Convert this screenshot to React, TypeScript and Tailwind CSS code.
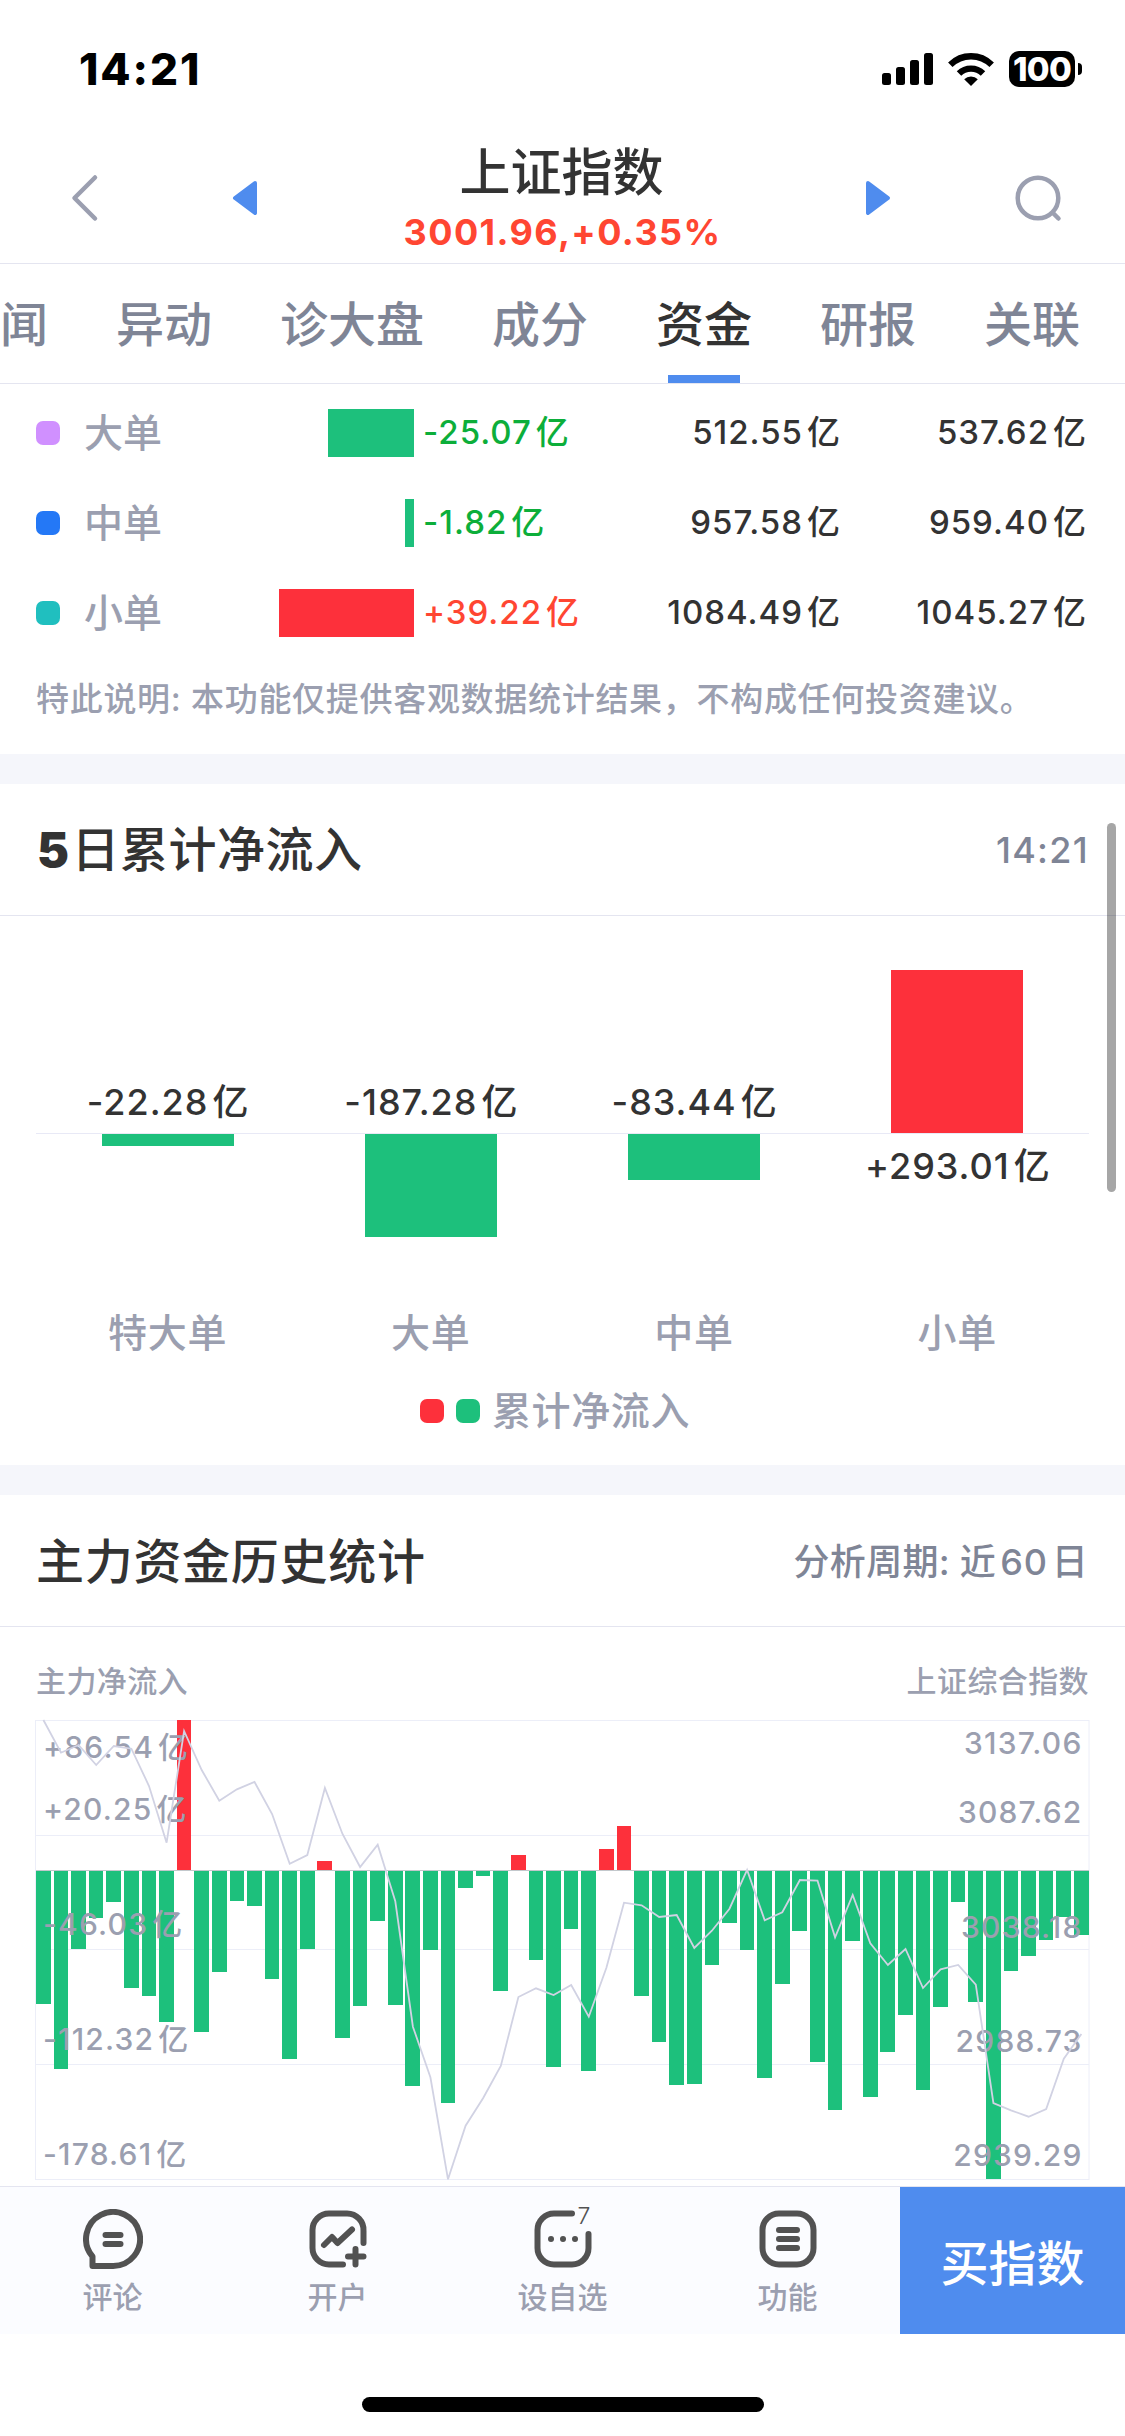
import React from 'react';
import clsx from 'clsx';

type Tab = { name: string; active?: boolean };

type OrderRow = {
  name: string;
  dot: string;
  value: string;
  up: boolean;
  barWidth: number;
  inflow: string;
  outflow: string;
};

type FiveDayItem = { name: string; value: string; height: number; up: boolean };

const tabs: Tab[] = [
  { name: '闻' },
  { name: '异动' },
  { name: '诊大盘' },
  { name: '成分' },
  { name: '资金', active: true },
  { name: '研报' },
  { name: '关联' },
];

const orderRows: OrderRow[] = [
  { name: '大单', dot: 'bg-[#d090ff]', value: '-25.07', up: false, barWidth: 86, inflow: '512.55', outflow: '537.62' },
  { name: '中单', dot: 'bg-[#2478f6]', value: '-1.82', up: false, barWidth: 9, inflow: '957.58', outflow: '959.40' },
  { name: '小单', dot: 'bg-[#20bfbf]', value: '+39.22', up: true, barWidth: 135, inflow: '1084.49', outflow: '1045.27' },
];

const fiveDays: FiveDayItem[] = [
  { name: '特大单', value: '-22.28', height: 12, up: false },
  { name: '大单', value: '-187.28', height: 103, up: false },
  { name: '中单', value: '-83.44', height: 46, up: false },
  { name: '小单', value: '+293.01', height: 163, up: true },
];

// 主力净流入：正数向上，负数向下
const flows = [
  -134, -199, -79, -48, -32, -118, -126, -152, 150, -162, -102, -31, -36, -109, -189,
  -79, 9, -168, -136, -51, -135, -216, -80, -233, -18, -6, -121, 15, -90, -197,
  -59, -201, 21, 44, -126, -172, -215, -214, -95, -53, -80, -208, -114, -61, -192,
  -240, -71, -227, -182, -145, -220, -137, -32, -132, -309, -101, -86, -70, -47, -65,
];

// 上证综合指数走势
const indexLine = [
  0, 32.7, 25, 45, 26, 28.7, 66, 122.7, 11, 50, 80.7, 69.3, 62, 94, 143.7,
  135, 68, 114, 147, 124.7, 181.3, 306.7, 357.3, 459.3, 405.7, 378, 346, 277, 268.3, 275,
  265, 296.7, 247.7, 182.7, 185.3, 197, 195, 228, 210.7, 188.7, 150, 200.3, 192.3, 160, 160.7,
  217.3, 175, 223.3, 245, 229, 268, 249.3, 245, 264.7, 383, 390.3, 396.7, 389, 338.7, 314,
];

const leftLabels: [string, number][] = [
  ['+86.54', 26.5],
  ['+20.25', 89],
  ['-46.03', 204],
  ['-112.32', 319],
  ['-178.61', 433.5],
];

const rightLabels: [string, number][] = [
  ['3137.06', 23.5],
  ['3087.62', 92],
  ['3038.18', 207],
  ['2988.73', 321.5],
  ['2939.29', 435.5],
];

function Amount({ value }: { value: string }) {
  return (
    <>
      {value}
      <span className="ml-[4px] tracking-normal">亿</span>
    </>
  );
}

function StatusBar() {
  return (
    <div className="flex h-[135px] items-start justify-between pt-[47px] pr-[43px] pl-[79px]">
      <div className="text-[44px] leading-[44px] font-extrabold tracking-[1.9px] text-black">14:21</div>
      <div className="flex h-[44px] items-center">
        <svg width="51" height="32" viewBox="0 0 51 32">
          <rect x="0" y="20" width="9" height="12" rx="2.5" />
          <rect x="14" y="14" width="9" height="18" rx="2.5" />
          <rect x="28" y="7" width="9" height="25" rx="2.5" />
          <rect x="42" y="0" width="9" height="32" rx="2.5" />
        </svg>
        <svg className="ml-[15px]" width="46" height="33" viewBox="0 0 46 33">
          <path d="M23 33 L16.2 26.3 A9.6 9.6 0 0 1 29.8 26.3 Z" />
          <path d="M11 20.5 A17 17 0 0 1 35 20.5" fill="none" stroke="#000" strokeWidth="6.3" />
          <path d="M2.3 11.8 A29.3 29.3 0 0 1 43.7 11.8" fill="none" stroke="#000" strokeWidth="6.3" />
        </svg>
        <div className="ml-[15px] flex h-9 w-[66px] items-center justify-center rounded-[10px] bg-black text-[33px] leading-none font-extrabold tracking-[-0.8px] text-white">
          100
        </div>
        <div className="ml-[3px] h-3 w-1 rounded-r-full bg-black" />
      </div>
    </div>
  );
}

function Header() {
  return (
    <header className="flex h-[129px] items-center border-b border-[#e4e5f0]">
      <svg className="mb-[2px] ml-[70px]" width="30" height="48" viewBox="0 0 30 48" fill="none" stroke="#9b9fb0" strokeWidth="4.5" strokeLinecap="round" strokeLinejoin="round">
        <path d="M25 3.5 L4.5 24 L25 44.5" />
      </svg>
      <svg className="mb-[2px] ml-[132px]" width="26" height="36" viewBox="0 0 26 36" fill="#4f8cee" stroke="#4f8cee" strokeWidth="4" strokeLinejoin="round">
        <path d="M23 3 L3 18 L23 33 Z" />
      </svg>
      <div className="flex flex-1 flex-col items-center">
        <h1 className="mt-[4px] text-[51px] leading-[56px] font-medium text-[#333]">上证指数</h1>
        <div className="mt-[5px] ml-[2px] text-[36px] leading-[52px] font-bold tracking-[1.4px] text-[#ff4632]">3001.96,+0.35%</div>
      </div>
      <svg className="mr-[122px] mb-[2px]" width="26" height="36" viewBox="0 0 26 36" fill="#4f8cee" stroke="#4f8cee" strokeWidth="4" strokeLinejoin="round">
        <path d="M3 3 L23 18 L3 33 Z" />
      </svg>
      <svg className="mr-[62px] mb-[2px]" width="50" height="50" viewBox="0 0 50 50" fill="none" stroke="#9b9fb0" strokeWidth="4.5" strokeLinecap="round">
        <circle cx="25" cy="25" r="20.3" />
        <path d="M40 40 L45.5 45.5" />
      </svg>
    </header>
  );
}

function TabBar() {
  return (
    <nav className="flex h-[120px] gap-[68px] border-b border-[#e4e5f0]">
      {tabs.map((t) => (
        <div
          key={t.name}
          className={clsx('flex shrink-0 flex-col items-center text-[48px] font-medium', t.active ? 'text-[#333]' : 'text-[#7f8596]')}
        >
          <span className="mt-[1px] h-[110px] leading-[120px]">{t.name}</span>
          {t.active && <span className="h-[9px] w-[72px] bg-[#4f8cee]" />}
        </div>
      ))}
    </nav>
  );
}

function OrderTable() {
  return (
    <section className="h-[370px] pt-1">
      {orderRows.map((r) => (
        <div key={r.name} className="flex h-[90px] items-center text-[33px] font-medium tracking-[1px]">
          <span className={clsx('ml-9 size-6 rounded-[7px]', r.dot)} />
          <span className="ml-6 text-[39px] tracking-normal text-[#9b9fb0]">{r.name}</span>
          <div className="flex flex-1 items-center">
            <div className="flex w-[252px] justify-end">
              <div className={clsx('h-12', r.up ? 'bg-[#fd303b]' : 'bg-[#1dc07c]')} style={{ width: r.barWidth }} />
            </div>
            <span className={clsx('ml-[9px]', r.up ? 'text-[#ff4632]' : 'text-[#0cae3a]')}>
              <Amount value={r.value} />
            </span>
          </div>
          <span className="w-[250px] text-right text-[#333]">
            <Amount value={r.inflow} />
          </span>
          <span className="mr-[39px] w-[246px] text-right text-[#333]">
            <Amount value={r.outflow} />
          </span>
        </div>
      ))}
      <p className="ml-9 pt-[17px] text-[33px] leading-[48px] font-medium tracking-[0.7px] whitespace-nowrap text-[#9b9fb0]">
        特此说明: 本功能仅提供客观数据统计结果，不构成任何投资建议。
      </p>
    </section>
  );
}

function FiveDayChart() {
  return (
    <section>
      <div className="flex h-[132px] items-center justify-between border-b border-[#e4e5f0] pr-9 pl-9">
        <h2 className="pt-[1px] text-[48px] leading-none font-medium tracking-[0.5px] text-[#333]">
          <span className="mr-[2px] ml-[1px] font-black">5</span>日累计净流入
        </h2>
        <span className="text-[36px] leading-none font-medium tracking-[1.3px] text-[#7f8596]">14:21</span>
      </div>
      <div className="mx-9 grid grid-cols-4 text-[36px] leading-[42px] font-medium tracking-[1px] text-[#333]">
        {fiveDays.map((d) => (
          <div key={d.name} className="flex flex-col items-center">
            <div className="flex h-[218px] w-full flex-col items-center justify-end border-b border-[#e8e9f6]">
              {d.up ? (
                <div className="w-[132px] bg-[#fd303b]" style={{ height: d.height }} />
              ) : (
                <span className="mb-[10px]">
                  <Amount value={d.value} />
                </span>
              )}
            </div>
            <div className="flex h-[168px] flex-col items-center">
              {d.up ? (
                <span className="mt-[11px]">
                  <Amount value={d.value} />
                </span>
              ) : (
                <div className="w-[132px] bg-[#1dc07c]" style={{ height: d.height }} />
              )}
            </div>
            <span className="h-[62px] text-[39px] leading-[62px] tracking-[0.8px] text-[#9b9fb0]">{d.name}</span>
          </div>
        ))}
      </div>
      <div className="flex h-[101px] items-center pl-[420px] text-[39px] font-medium tracking-[0.6px] text-[#9b9fb0]">
        <span className="mt-[-7px] size-6 rounded-[7px] bg-[#fd303b]" />
        <span className="mt-[-7px] ml-3 size-6 rounded-[7px] bg-[#1dc07c]" />
        <span className="mt-[-6px] ml-3">累计净流入</span>
      </div>
    </section>
  );
}

function HistoryChart() {
  const left = (i: number) => i * 17.593;
  const points = indexLine.map((y, i) => `${(left(i) + 7.4).toFixed(1)},${y}`).join(' ');

  return (
    <section className="h-[691px]">
      <div className="flex h-[132px] items-center justify-between border-b border-[#e4e5f0] px-9">
        <h2 className="pt-[2px] text-[48px] leading-none font-medium tracking-[0.7px] text-[#333]">主力资金历史统计</h2>
        <span className="mr-[1px] pt-[2px] text-[36px] leading-none font-medium tracking-[0.3px] text-[#7f8596]">
          分析周期: 近<span className="mx-[4px] tracking-[0.8px]">60</span>日
        </span>
      </div>
      <div className="flex h-[93px] items-center justify-between px-9 pt-[15px] text-[30px] font-medium tracking-[0.4px] text-[#9b9fb0]">
        <span>主力净流入</span>
        <span>上证综合指数</span>
      </div>
      <svg className="ml-9 block overflow-visible" width="1053" height="460" viewBox="0 0 1053 460">
        <g stroke="#eceef8" strokeWidth="1">
          <path d="M0 115.5 H1053 M0 229.5 H1053 M0 344.5 H1053" />
          <rect x="-0.5" y="0.5" width="1053.5" height="459" fill="none" />
        </g>
        <g shapeRendering="crispEdges">
          {flows.map((v, i) => {
            const x = Math.round(left(i));
            const w = Math.round(left(i) + 14.65) - x;
            return v > 0 ? (
              <rect key={i} x={x} y={150 - v} width={w} height={v} fill="#fd303b" />
            ) : (
              <rect key={i} x={x} y={150} width={w} height={-v} fill="#1dc07c" />
            );
          })}
        </g>
        <path d="M0 150.5 H1053" stroke="#c3c8cc" strokeWidth="1" />
        <g fill="#9b9fb0" fontSize="30" fontWeight="500" letterSpacing="1.2">
          {leftLabels.map(([t, y]) => (
            <text key={t} x="7" y={y + 11}>
              {t}
              <tspan dx="4">亿</tspan>
            </text>
          ))}
          {rightLabels.map(([t, y]) => (
            <text key={t} x="1046.5" y={y + 10.5} textAnchor="end">
              {t}
            </text>
          ))}
        </g>
        <polyline points={points} fill="none" stroke="#d1d2e3" strokeWidth="1.8" />
      </svg>
    </section>
  );
}

function CommentIcon() {
  return (
    <svg width="60" height="60" viewBox="0 0 60 60" fill="none" stroke="#525252" strokeWidth="6" strokeLinecap="round" strokeLinejoin="round">
      <path d="M9.5 57 V47.5 A27 27 0 1 1 30 57 Z" />
      <path d="M22.5 26 H37.5 M22.5 35 H37.5" />
    </svg>
  );
}

function OpenAccountIcon() {
  return (
    <svg width="60" height="60" viewBox="0 0 60 60" fill="none" stroke="#525252" strokeWidth="6" strokeLinecap="round" strokeLinejoin="round">
      <path d="M55.5 34 V22 A16.5 16.5 0 0 0 39 4.5 H21 A16.5 16.5 0 0 0 4.5 21 V39 A16.5 16.5 0 0 0 21 55.5 H35" />
      <path d="M16 36 L24 28 L29.5 34 L44 20.5" />
      <path d="M47.5 40 V55.5 M40 47.5 H55.5" />
    </svg>
  );
}

function WatchIcon() {
  return (
    <div className="relative size-[60px]">
      <svg width="60" height="60" viewBox="0 0 60 60" fill="none" stroke="#525252" strokeWidth="6" strokeLinecap="round">
        <path d="M39 4.5 H21 A16.5 16.5 0 0 0 4.5 21 V39 A16.5 16.5 0 0 0 21 55.5 H39 A16.5 16.5 0 0 0 55.5 39 V25" />
        <path d="M18 30 H18.01 M30 30 H30.01 M42 30 H42.01" />
      </svg>
      <span className="absolute top-[-5px] left-[45px] text-[23px] leading-[24px] font-light text-[#525252]">7</span>
    </div>
  );
}

function MenuIcon() {
  return (
    <svg width="60" height="60" viewBox="0 0 60 60" fill="none" stroke="#525252" strokeWidth="6" strokeLinecap="round">
      <rect x="4.5" y="4.5" width="51" height="51" rx="16.5" />
      <path d="M21 21 H39 M21 30 H39 M21 39 H39" />
    </svg>
  );
}

const actions = [
  { name: '评论', icon: <CommentIcon /> },
  { name: '开户', icon: <OpenAccountIcon /> },
  { name: '设自选', icon: <WatchIcon /> },
  { name: '功能', icon: <MenuIcon /> },
];

function BottomBar() {
  return (
    <footer className="flex h-[148px] border-t border-[#e4e5f0] bg-[#fbfcff]">
      {actions.map((a) => (
        <div key={a.name} className="flex w-[225px] flex-col items-center pt-[22px] text-[30px] leading-[44px] font-medium text-[#9b9fb0]">
          {a.icon}
          <span className="mt-[6px]">{a.name}</span>
        </div>
      ))}
      <button className="w-[225px] bg-[#4f8cee] pt-[7px] text-[48px] leading-none font-medium text-white">买指数</button>
    </footer>
  );
}

export default function App() {
  return (
    <div className="relative flex h-[2436px] w-[1125px] flex-col overflow-hidden bg-white font-['Inter','Noto_Sans_CJK_SC',sans-serif]">
      <StatusBar />
      <Header />
      <TabBar />
      <OrderTable />
      <div className="h-[30px] bg-[#f5f6fb]" />
      <FiveDayChart />
      <div className="h-[30px] bg-[#f5f6fb]" />
      <HistoryChart />
      <BottomBar />
      <div className="mx-auto mt-[63px] h-[15px] w-[402px] rounded-full bg-black" />

      {/* 滚动条 */}
      <div className="absolute top-[823px] right-[9px] h-[369px] w-[9px] rounded-full bg-black/35" />
    </div>
  );
}
